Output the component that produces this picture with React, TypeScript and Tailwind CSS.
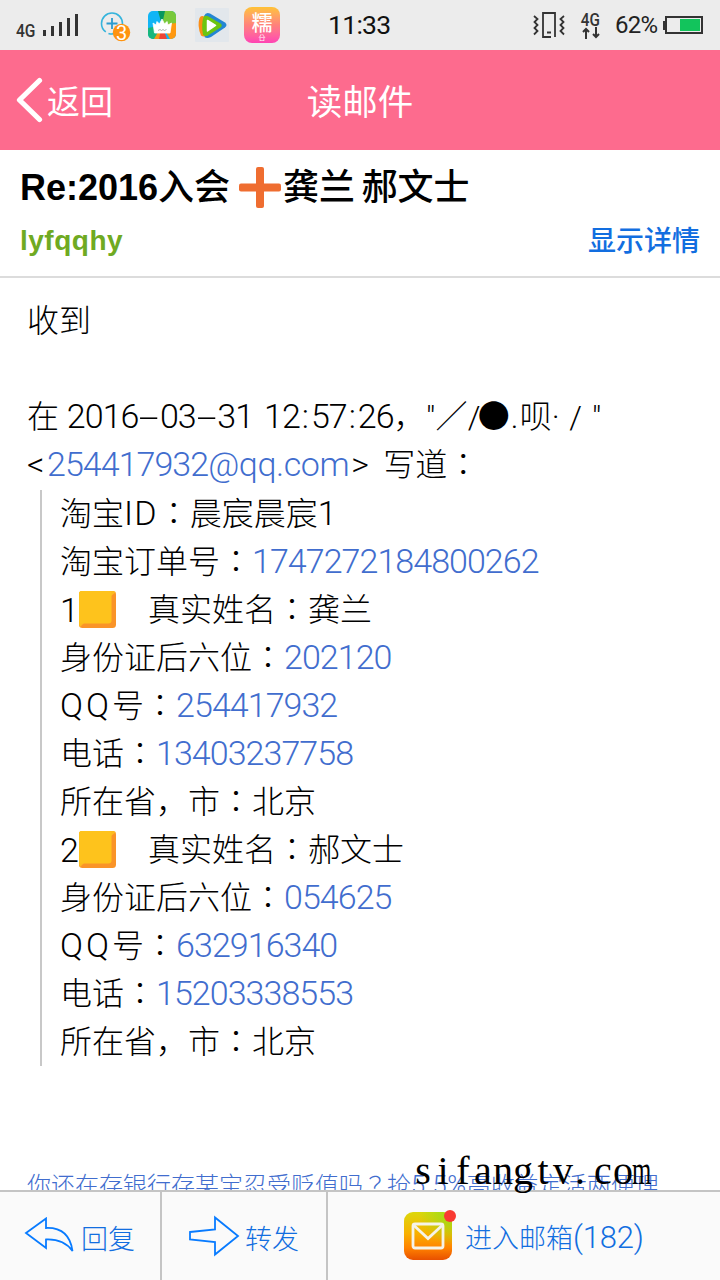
import type { ReactNode } from "react";

type Line = { label: string; value?: string; index?: string };

const quoted: Line[] = [
  { label: "淘宝ID：晨宸晨宸1" },
  { label: "淘宝订单号：", value: "1747272184800262" },
  { index: "1", label: "真实姓名：龚兰" },
  { label: "身份证后六位：", value: "202120" },
  { label: "QQ号：", value: "254417932" },
  { label: "电话：", value: "13403237758" },
  { label: "所在省，市：北京" },
  { index: "2", label: "真实姓名：郝文士" },
  { label: "身份证后六位：", value: "054625" },
  { label: "QQ号：", value: "632916340" },
  { label: "电话：", value: "15203338553" },
  { label: "所在省，市：北京" },
];

function SignalBars() {
  return (
    <svg width="36" height="24" viewBox="0 0 36 24" fill="#333">
      <rect x="0" y="17" width="3" height="6" />
      <rect x="8" y="13" width="3" height="10" />
      <rect x="16" y="9" width="3" height="14" />
      <rect x="24" y="5" width="3" height="18" />
      <rect x="32" y="1" width="3" height="22" />
    </svg>
  );
}

function PlusBadgeIcon() {
  return (
    <svg width="32" height="32" viewBox="0 0 32 32" fill="none">
      <circle cx="12" cy="12.5" r="10.5" stroke="#35b4dc" strokeWidth="1.6" strokeDasharray="20 3 43 0" />
      <path d="M12 7v11M6.5 12.5h11" stroke="#2b9cd0" strokeWidth="1.8" />
      <circle cx="21.5" cy="21.5" r="8.7" fill="#ff9310" />
      <text x="21.5" y="28.5" textAnchor="middle" fontSize="20" fill="#fff" fontFamily="Roboto, sans-serif">
        3
      </text>
    </svg>
  );
}

function CrownIcon() {
  return (
    <svg width="28" height="28" viewBox="0 0 28 28">
      <clipPath id="crown-clip">
        <rect width="28" height="28" rx="5" />
      </clipPath>
      <g clipPath="url(#crown-clip)">
        <rect width="28" height="28" fill="#11b5f5" />
        <path d="M14 14L10 0h8z" fill="#079660" />
        <path d="M14 14L17 0h11v13z" fill="#79c93b" />
        <path d="M14 14l14-2v16h-6z" fill="#ff980f" />
        <path d="M14 14l5 14h-9z" fill="#ef4535" />
        <path d="M14 14L11 28H5z" fill="#f39a19" />
        <path d="M14 14L6 28H0V17z" fill="#17b77c" />
      </g>
      <path d="M5 12L8 14L9 10.500L11.500 13L14 8L16.500 13L19 10.500L20 14L23.500 12L22 22H6.500z" fill="#fff" stroke="#fff" strokeWidth=".8" strokeLinejoin="round" />
      <path d="M10 19.500l2-1 1.500 1 1.500-1 1.500 1 2-1" stroke="#999" strokeWidth=".8" fill="none" />
    </svg>
  );
}

function VideoIcon() {
  return (
    <svg width="34" height="34" viewBox="0 0 34 34">
      <rect width="34" height="34" rx="1" fill="#e2e7ec" />
      <path d="M9 8Q11 3.500 15 5.500L30 14.500Q33 17 30 19.500L16 29Q12 31 9.500 29z" fill="#2386d3" />
      <path d="M4.500 10Q6 6.500 10 9L13 27Q9 29.500 6 27.500Q2 18 4.500 10z" fill="#fb8d15" />
      <path d="M8.500 9Q10.500 7 13.500 8.500L25.500 15.500Q28 17.500 25.500 19.500L12 28Q9 28.500 8 26.500Q6 17 8.500 9z" fill="#6cc511" />
      <path d="M12.500 12.500L20.500 17.500L12.500 23z" fill="#fff" stroke="#fff" strokeWidth="1.500" strokeLinejoin="round" />
    </svg>
  );
}

function VibrateIcon() {
  return (
    <svg width="32" height="28" viewBox="0 0 32 28" fill="none" stroke="#333" strokeWidth="1.8">
      <path d="M18 26H10V2h12v24M14 21.500h4" />
      <path d="M1 5l3.500 3L1.500 11l3 3-3 3 3 3L1 23.500M31 5l-3.500 3 3 3-3 3 3 3-3 3 3.500 3.500" />
    </svg>
  );
}

function StatusBar() {
  return (
    <div className="flex h-[50px] items-center bg-[#ececec] pl-4 font-[Roboto,'Noto_Sans_CJK_SC',sans-serif] text-[#333]">
      <span className="mt-2.5 w-[27px] text-[19px] leading-none font-medium">
        <span className="inline-block origin-left scale-x-[0.82]">4G</span>
      </span>
      <SignalBars />
      <div className="mt-1 ml-[21px]">
        <PlusBadgeIcon />
      </div>
      <div className="ml-4">
        <CrownIcon />
      </div>
      <div className="ml-[19px]">
        <VideoIcon />
      </div>
      <div className="ml-[15px] flex h-9 w-9 flex-col items-center rounded-lg bg-linear-to-b from-[#ffc232] via-[#ff817a] to-[#ff42b4] font-['Noto_Sans_CJK_SC',sans-serif] text-white">
        <span className="pt-[3px] text-[21px] leading-[23px] font-medium">糯</span>
        <span className="text-[7px] leading-[8px]">㕣</span>
      </div>
      <span className="ml-12 w-[205px] text-[26.5px] leading-none tracking-[-0.7px] text-[#111]">11:33</span>
      <VibrateIcon />
      <div className="ml-[15px] flex w-[21px] flex-col items-center">
        <span className="scale-x-[0.85] text-[18px] leading-[15px] font-medium">4G</span>
        <svg width="18" height="12" viewBox="0 0 18 12" fill="none" stroke="#333" strokeWidth="2">
          <path d="M4 12V2M1 5l3-3 3 3M14 0v10M11 7l3 3 3-3" />
        </svg>
      </div>
      <span className="ml-3.5 w-12 text-[24px] leading-none tracking-[-0.7px] text-[#222]">62%</span>
      <svg width="41" height="19" viewBox="0 0 41 19">
        <path d="M0 5h3v9H0z" fill="#333" />
        <rect x="3" y="1" width="36" height="16" fill="none" stroke="#333" strokeWidth="2" />
        <rect x="17" y="3" width="20" height="12" fill="#12c45c" />
      </svg>
    </div>
  );
}

function NavBar() {
  return (
    <div className="grid h-[100px] grid-cols-3 items-center bg-[#fd6b8e] font-['Noto_Sans_CJK_SC',sans-serif] text-white">
      <div className="flex items-center pl-4">
        <svg width="30" height="48" viewBox="0 0 30 48" fill="none" stroke="#fff" strokeWidth="5.2" strokeLinecap="round" strokeLinejoin="round">
          <path d="M23.500 4.500L3.500 24l20 19.500" />
        </svg>
        <span className="ml-px pt-0.5 text-[33px]">返回</span>
      </div>
      <h1 className="text-center text-[35.5px]">读邮件</h1>
    </div>
  );
}

function OrangeCross() {
  return (
    <svg width="42" height="42" viewBox="0 0 42 42" fill="#ef6d30">
      <rect x="17" y="0" width="8" height="41" rx="2" />
      <rect x="0" y="16.5" width="42" height="8" rx="2" />
    </svg>
  );
}

function SubjectHeader() {
  return (
    <div className="h-32 border-b-2 border-[#dcdcdc] px-5">
      <h2 className="flex h-[75px] items-center font-['Liberation_Sans','Noto_Sans_CJK_SC',sans-serif] text-[36px] font-bold text-black">
        <span>Re:2016</span>
        <span className="mr-[9px] font-medium">入会</span>
        <OrangeCross />
        <span className="ml-0.5 font-medium whitespace-pre [word-spacing:-3.5px]">龚兰 郝文士</span>
      </h2>
      <div className="flex h-8 items-center justify-between">
        <span className="font-['Liberation_Sans',sans-serif] text-[28px] font-bold tracking-[0.5px] text-[#6faa22]">lyfqqhy</span>
        <span className="pb-1 font-['Noto_Sans_CJK_SC',sans-serif] text-[28px] font-medium text-[#126ee0]">显示详情</span>
      </div>
    </div>
  );
}

function Dash() {
  return <span className="inline-block w-[21.5px] scale-x-[2.3] text-center">-</span>;
}

function Num({ children }: { children: ReactNode }) {
  return <span className="text-[34px] leading-none tracking-[-0.95px]">{children}</span>;
}

function TimeColon() {
  return <span className="inline-block w-[11px] text-center text-[34px] leading-none">:</span>;
}

/** Sets digits, latin letters and centred full-width marks each in their own face and pitch. */
function Mixed({ text }: { text: string }) {
  return text.split(/(\d+|[A-Z]+|[：？])/).map((part, i) => {
    if (/^\d/.test(part)) return <Num key={i}>{part}</Num>;
    if (/^[A-Z]/.test(part)) {
      return (
        <span key={i} className={part === "QQ" ? "text-[34px] leading-none tracking-[3px]" : "text-[34px] leading-none tracking-[1.2px]"}>
          {part}
        </span>
      );
    }
    if (/^[：？]/.test(part)) {
      return (
        <span key={i} className="font-['Noto_Sans_CJK_TC',sans-serif] leading-none" lang="zh-TW">
          {part}
        </span>
      );
    }
    return part;
  });
}

function BlueText({ children }: { children: ReactNode }) {
  return <span className="text-[#416dce]">{children}</span>;
}

function YellowTile() {
  return (
    <svg width="37" height="37" viewBox="0 0 37 37">
      <rect width="37" height="37" rx="3.5" fill="#fa9428" />
      <path d="M3 0H34L37 1L32 5V29Q32 32 29 32H5L1 36L0 34V3Q0 0 3 0z" fill="#fdbc20" />
      <rect width="32.5" height="32.5" rx="3" fill="#fec31c" />
    </svg>
  );
}

function QuotedLine({ line }: { line: Line }) {
  return (
    <div className="flex h-12 items-center pb-px whitespace-pre">
      {line.index && (
        <span className="mr-8 flex items-center gap-px">
          <Num>{line.index}</Num>
          <YellowTile />
        </span>
      )}
      <span>
        <Mixed text={line.label} />
        {line.value && (
          <BlueText>
            <Num>{line.value}</Num>
          </BlueText>
        )}
      </span>
    </div>
  );
}

function MailBody() {
  return (
    <div className="h-[912px] overflow-hidden pt-[19px] pl-[27px] font-[Roboto,'Noto_Sans_CJK_SC',sans-serif] text-[32px] leading-[48px] font-light text-black">
      <p className="mb-12 h-12">收到</p>
      <p className="h-12 whitespace-pre">
        在 <Num>2016</Num>
        <Dash />
        <Num>03</Num>
        <Dash />
        <Num>31</Num>
        <span className="inline-block w-[11px]"> </span>
        <Num>12</Num>
        <TimeColon />
        <Num>57</Num>
        <TimeColon />
        <Num>26</Num>，
        <span className="inline-block w-[10px] text-center">"</span>
        ／
        <span className="inline-block w-[10px] text-center">/</span>
        ●
        <span className="inline-block w-[10px] text-center">.</span>
        呗
        <span className="inline-block w-[8px] text-center">·</span>
        <span className="inline-block w-[32px] text-center">/</span>
        <span className="inline-block w-[10px] text-center">"</span>
      </p>
      <p className="h-12 whitespace-pre">
        <span className="inline-block w-[20px] text-[34px] leading-none">{"<"}</span>
        <BlueText>
          <Num>254417932</Num>
          <span className="text-[34px] leading-none tracking-[-0.4px]">@qq.com</span>
        </BlueText>
        <span className="inline-block w-[34px] pl-0.5 text-[34px] leading-none">{">"}</span>
        <Mixed text="写道：" />
      </p>
      <div className="mt-px ml-[13px] border-l-2 border-[#c8c8c8] pl-[18px]">
        {quoted.map((line, i) => (
          <QuotedLine key={i} line={line} />
        ))}
      </div>
      <p className="mt-[100px] h-10 text-[24px] leading-10 whitespace-nowrap text-[#416dce]">
        你还在存银行存某宝忍受贬值吗
        <span className="font-['Noto_Sans_CJK_TC',sans-serif] leading-none" lang="zh-TW">？</span>
        抢<span className="text-[25.5px] leading-none tracking-[0.6px]">5.5%</span>高收益定活两便理
      </p>
    </div>
  );
}

function Watermark() {
  return (
    <div className="absolute top-[1148px] left-[414px] flex font-['Liberation_Serif',serif] text-[40px] leading-[46px] text-black">
      {"sifangtv.com".split("").map((ch, i) => (
        <span key={i} className="flex w-5 justify-center">
          <span className={ch === "m" ? "-ml-1 inline-block scale-x-[0.62]" : ch === "." ? "-ml-2" : "-ml-0.5"}>{ch}</span>
        </span>
      ))}
    </div>
  );
}

function BottomBar() {
  return (
    <div className="flex h-[90px] border-t-2 border-[#c4c4c4] bg-[#fafafa] font-['Noto_Sans_CJK_SC',sans-serif] text-[27px] font-light text-[#126ee0]">
      <div className="flex w-[162px] items-center border-r-2 border-[#c4c4c4] pl-6">
        <svg width="50" height="38" viewBox="0 0 50 38" fill="none" stroke="#087bff" strokeWidth="1.8">
          <path d="M2 16L22 1.500V11C35 10.500 46 16 48.500 34C42 25 34 22 22 22.500V31z" />
        </svg>
        <span className="ml-[7px] pt-1">回复</span>
      </div>
      <div className="flex w-[166px] items-center border-r-2 border-[#c4c4c4] pl-[26px]">
        <svg width="52" height="42" viewBox="0 0 52 42" fill="none" stroke="#087bff" strokeWidth="1.8">
          <path d="M2 17L27 14.500V2.500L50 21L27 39.500V27L2 24.500z" />
        </svg>
        <span className="ml-[5px] pt-1">转发</span>
      </div>
      <div className="flex flex-1 items-center pl-[76px]">
        <div className="relative h-12 w-12">
          <svg width="48" height="48" viewBox="0 0 48 48">
            <defs>
              <linearGradient id="mail-bg" x1="0" y1="0" x2="0" y2="1">
                <stop offset="0" stopColor="#dcd80c" />
                <stop offset=".45" stopColor="#f8b000" />
                <stop offset=".75" stopColor="#ff8200" />
                <stop offset="1" stopColor="#e85000" />
              </linearGradient>
              <radialGradient id="mail-glow" cx="1" cy="0" r=".7">
                <stop offset="0" stopColor="#94de18" />
                <stop offset="1" stopColor="#94de18" stopOpacity="0" />
              </radialGradient>
            </defs>
            <rect width="48" height="48" rx="9" fill="url(#mail-bg)" />
            <rect width="48" height="48" rx="9" fill="url(#mail-glow)" />
            <rect x="9" y="12" width="30" height="24" rx="2" fill="none" stroke="#f5f3e8" strokeWidth="2.8" />
            <path d="M10 13.500L24 26.500L38 13.500" fill="none" stroke="#f5f3e8" strokeWidth="2.8" />
          </svg>
          <span className="absolute -top-0.5 -right-1 h-3 w-3 rounded-full bg-[#f93a32]" />
        </div>
        <span className="ml-[13px] pt-1 font-[Roboto,'Noto_Sans_CJK_SC',sans-serif] whitespace-nowrap">
          进入邮箱<span className="text-[31px] tracking-[-0.2px]">(182)</span>
        </span>
      </div>
    </div>
  );
}

export default function App() {
  return (
    <div className="relative h-[1280px] w-[720px] overflow-hidden bg-white">
      <StatusBar />
      <NavBar />
      <SubjectHeader />
      <MailBody />
      <BottomBar />
      <Watermark />
    </div>
  );
}
